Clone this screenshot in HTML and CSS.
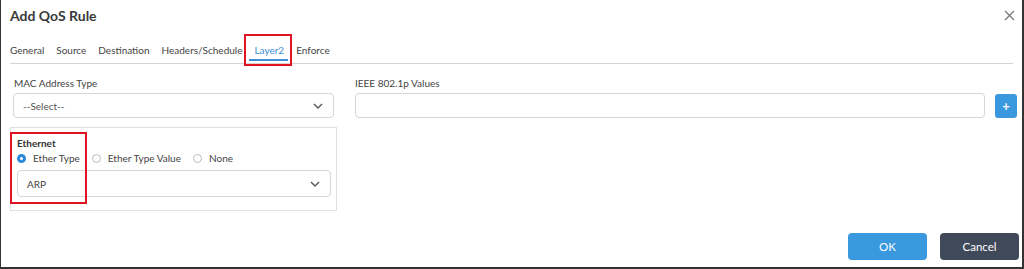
FILE: index.html
```html
<!doctype html>
<html lang="en">
<head>
  <meta charset="UTF-8">
  <title>Add QoS Rule</title>
  <link rel="stylesheet" href="styles.css">
</head>
<body>
  <div class="modal">
    <header class="modal-head">
      <h1>Add QoS Rule</h1>
      <svg class="close" width="11" height="11" viewBox="0 0 11 11"><path d="M1 1l9 9M10 1l-9 9" stroke="#777" stroke-width="1.3"/></svg>
    </header>

    <nav class="tabs">
      <span class="tab">General</span>
      <span class="tab">Source</span>
      <span class="tab">Destination</span>
      <span class="tab">Headers/Schedule</span>
      <span class="tab active">Layer2<span class="mark"></span></span>
      <span class="tab">Enforce</span>
    </nav>

    <div class="cols">
      <div class="col-left">
        <label class="lbl">MAC Address Type</label>
        <div class="select top">
          <span class="muted">--Select--</span>
          <svg class="chev" width="10" height="6" viewBox="0 0 10 6"><path d="M1 1l4 4 4-4" fill="none" stroke="#555" stroke-width="1.4"/></svg>
        </div>

        <div class="panel">
          <span class="hl"></span>
          <div class="panel-title">Ethernet</div>
          <div class="radios">
            <span class="radio on"></span><span class="rlabel">Ether Type</span>
            <span class="radio"></span><span class="rlabel">Ether Type Value</span>
            <span class="radio"></span><span class="rlabel">None</span>
          </div>
          <div class="select">
            <span>ARP</span>
            <svg class="chev" width="10" height="6" viewBox="0 0 10 6"><path d="M1 1l4 4 4-4" fill="none" stroke="#555" stroke-width="1.4"/></svg>
          </div>
        </div>
      </div>

      <div class="col-right">
        <label class="lbl">IEEE 802.1p Values</label>
        <div class="input-row">
          <div class="input"></div>
          <button class="plus">+</button>
        </div>
      </div>
    </div>

    <footer class="modal-foot">
      <button class="btn ok">OK</button>
      <button class="btn cancel">Cancel</button>
    </footer>
  </div>
</body>
</html>
```

FILE: styles.css
```css
*{
  box-sizing: border-box;
}

html, body{
  margin: 0;
  padding: 0;
  height: 100%;
}

body{
  color: #333;
  font-family: Lato, "Open Sans", sans-serif;
  font-size: 10px;
  background: #fff;
}

.modal{
  height: 269px;
  border-left: 1px solid #333;
  border-right: 2px solid #333;
  border-bottom: 2px solid #333;
  padding: 0 5px 0 9px;
  position: relative;
}

.modal-head{
  display: flex;
  justify-content: space-between;
  align-items: center;
  height: 34px;
  padding-bottom: 4px;
}

.modal-head h1{
  margin: 0;
  font-size: 14px;
  font-weight: bold;
  color: #3a3a3a;
}

.close{
  margin-right: 2px;
}

.tabs{
  display: flex;
  gap: 12px;
  height: 30px;
  align-items: center;
  border-bottom: 1px solid #d4d4d4;
  margin-right: 4px;
  padding-top: 2px;
}

.tab{
  color: #444;
  position: relative;
}

.tab.active{
  color: #3a8fd6;
  padding: 0 1px;
  margin: 0 -1px;
}

.tab.active .mark{
  position: absolute;
  left: -4px;
  right: -3px;
  top: 15px;
  height: 2px;
  background: #3a8fd6;
}

.tab.active::after{
  content: "";
  position: absolute;
  left: -9px;
  right: -7px;
  top: -10px;
  bottom: -10px;
  border: 2px solid #e0141e;
}

.cols{
  display: flex;
  gap: 18px;
  padding-top: 13px;
}

.col-left{
  width: 327px;
}

.col-right{
  flex: 1;
}

.lbl{
  display: block;
  color: #444;
  margin: 0 0 2px 4px;
  height: 14px;
}

.col-right .lbl{
  margin-left: 0;
}

.select{
  display: flex;
  justify-content: space-between;
  align-items: center;
  height: 25px;
  margin-left: 4px;
  padding: 0 10px 0 9px;
  border: 1px solid #d6d6d6;
  border-radius: 4px;
  color: #444;
}

.select.top{
  margin: 0 3px 0 3px;
}

.muted{
  color: #555;
}

.panel{
  position: relative;
  margin-top: 9px;
  border: 1px solid #e0e0e0;
  padding: 8px 5px 9px 2px;
  height: 84px;
}

.panel .select{
  height: 27px;
  margin-left: 4px;
}

.hl{
  position: absolute;
  left: -1px;
  top: 4px;
  width: 77px;
  height: 72px;
  border: 2px solid #e0141e;
}

.panel-title{
  font-weight: bold;
  margin-left: 4px;
  height: 14px;
  line-height: 14px;
}

.radios{
  display: flex;
  align-items: center;
  height: 16px;
  margin: 0 0 4px 4px;
}

.radio{
  width: 9px;
  height: 9px;
  border-radius: 50%;
  border: 1px solid #bbb;
  margin-right: 7px;
}

.radio.on{
  border: 3px solid #2d8ad8;
}

.rlabel{
  color: #444;
  margin-right: 12px;
}

.input-row{
  display: flex;
  align-items: center;
  gap: 10px;
}

.input{
  flex: 1;
  height: 25px;
  border: 1px solid #d6d6d6;
  border-radius: 4px;
}

.plus{
  width: 22px;
  height: 24px;
  border: none;
  border-radius: 3px;
  background: #3a98de;
  color: #fff;
  font-size: 13px;
  font-weight: bold;
  padding: 0;
  font-family: Lato, sans-serif;
}

.modal-foot{
  position: absolute;
  right: 3px;
  bottom: 7px;
  display: flex;
  gap: 13px;
}

.btn{
  width: 79px;
  height: 27px;
  border: none;
  border-radius: 4px;
  color: #fff;
  font-family: Lato, sans-serif;
  font-size: 11.5px;
}

.ok{
  background: #3a98de;
}

.cancel{
  background: #3f4959;
}
```
